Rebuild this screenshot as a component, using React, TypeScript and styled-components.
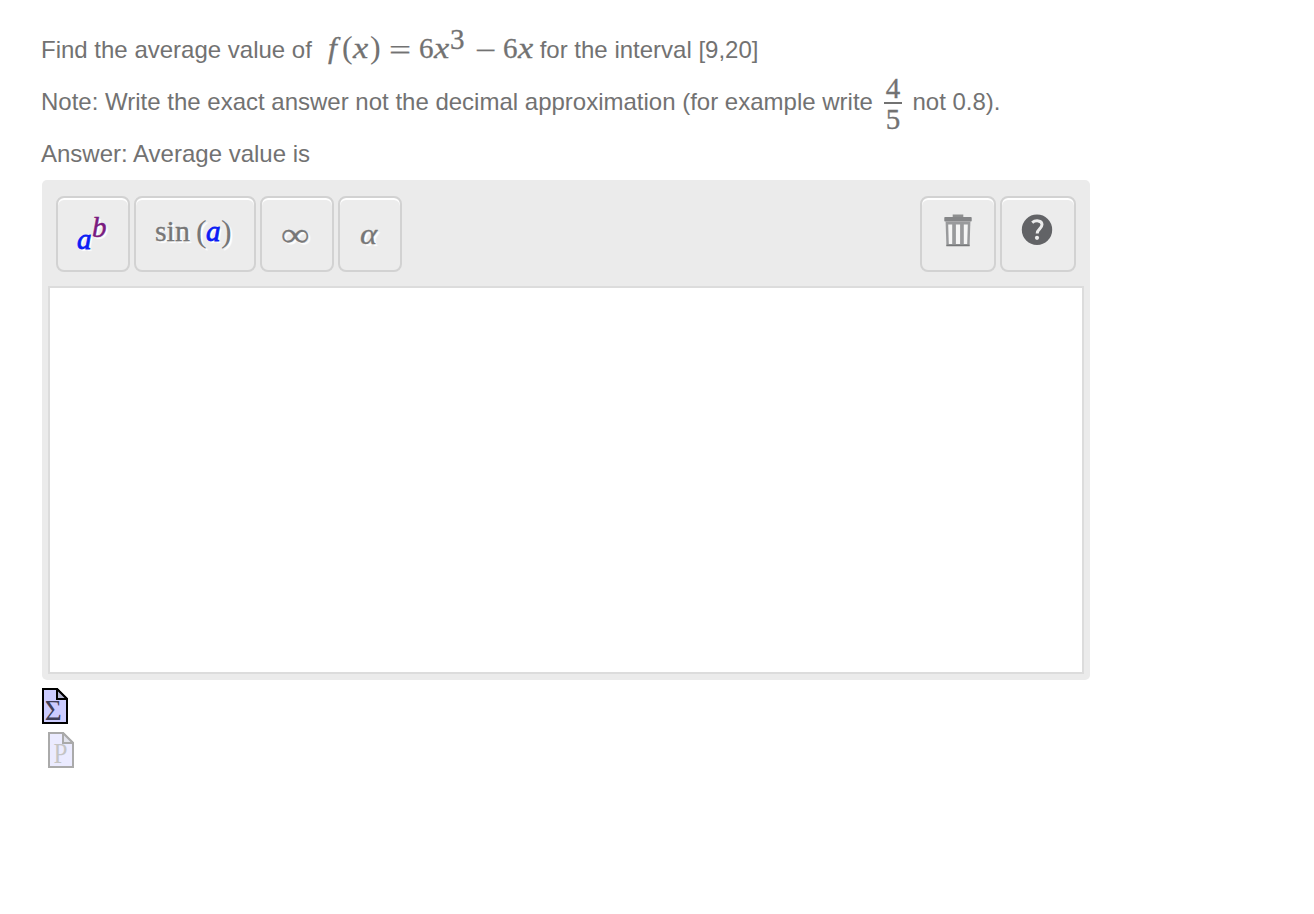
import React from 'react';
import styled, { createGlobalStyle } from 'styled-components';

interface IGlyphProps {
    $w: number;
    $size?: number;
    $raise?: number;
    $italic?: boolean;
    $weight?: number;
    $stretch?: number;
    $gap?: number;
    $color?: string;
}

const GlobalStyle = createGlobalStyle`
    * {
        box-sizing: border-box;
    }

    body {
        margin: 0;
        background: #fff;
        color: #727272;
        font-family: 'Liberation Sans', Arial, sans-serif;
        font-size: 24px;
    }
`;

const Page = styled.main`
    padding: 24px 0 0 41px;
`;

const Line = styled.p`
    height: 52px;
    margin: 0;
    line-height: 52px;
    white-space: nowrap;
`;

const Phrase = styled.span<{ $w: number }>`
    display: inline-block;
    width: ${p => p.$w}px;
`;

const Glyph = styled.span<IGlyphProps>`
    display: inline-block;
    width: ${p => p.$w}px;
    margin-left: ${p => p.$gap || 0}px;
    line-height: 0;
    vertical-align: ${p => p.$raise || 0}px;
    font-family: 'Liberation Serif', 'Times New Roman', serif;
    font-size: ${p => p.$size || 29}px;
    font-style: ${p => (p.$italic ? 'italic' : 'normal')};
    color: ${p => p.$color || 'inherit'};
    -webkit-text-stroke: ${p => p.$weight ?? 0.3}px currentColor;
    transform: scaleX(${p => p.$stretch || 1});
    transform-origin: left;
`;

const Fraction = styled.span`
    display: inline-flex;
    flex-direction: column;
    width: 18px;
    height: 54px;
    margin: 0 10.5px 0 11px;
    vertical-align: top;
    text-align: center;
    font-family: 'Liberation Serif', 'Times New Roman', serif;
    font-size: 29px;
    -webkit-text-stroke: 0.3px currentColor;
`;

const Numerator = styled.span`
    height: 28px;
    border-bottom: 2px solid #727272;
    line-height: 25px;
`;

const Denominator = styled.span`
    height: 26px;
    line-height: 31px;
`;

const Editor = styled.section`
    display: flex;
    flex-direction: column;
    width: 1048px;
    height: 500px;
    margin-left: 1px;
    padding: 16px 6px 6px;
    border-radius: 5px;
    background: #ebebeb;
`;

const Toolbar = styled.div`
    display: flex;
    justify-content: space-between;
    height: 90px;
    padding: 0 8px;
`;

const Group = styled.div`
    display: flex;
    gap: 4px;
`;

const ToolButton = styled.button<{ $w: number; $pad?: number }>`
    display: block;
    width: ${p => p.$w}px;
    height: 76px;
    padding: 0 0 0 ${p => p.$pad || 0}px;
    border: 2px solid #d2d2d2;
    border-radius: 8px;
    background: #ececec;
    box-shadow: inset 0 2px 0 #fff;
    color: #777;
    font-family: 'Liberation Serif', 'Times New Roman', serif;
    font-size: 29px;
    line-height: 72px;
    text-align: left;
    text-shadow: 2px 2px 1px #fff;
    white-space: nowrap;

    svg {
        display: block;
        margin-top: -7px;
    }
`;

const MathField = styled.div`
    flex: 1;
    border: 2px solid #dcdcdc;
    background: #fff;
`;

const Modes = styled.div`
    display: flex;
    flex-direction: column;
    gap: 8px;
    padding: 8px 0 0 1px;
`;

const ModeIcon = styled.svg<{ $indent?: number; $faded?: boolean }>`
    display: block;
    margin-left: ${p => p.$indent || 0}px;
    opacity: ${p => (p.$faded ? 0.38 : 1)};
`;

const TrashIcon = () => (
    <svg width="28" height="34" viewBox="0 0 28 34">
        <path d="M9.5 3V1.2h9V3" fill="#8e8f90" stroke="#8e8f90" strokeWidth="1.6" />
        <rect x="0.3" y="3" width="27.4" height="4.5" rx="0.8" fill="#858688" />
        <path d="M1.6 7.500h24.8l-.8 24.700H2.400z" fill="#999a9c" />
        <path d="M4.2 10.500h4v19.500H4.800zM11.900 10.500h4.200v19.500h-4.200zM19.800 10.500h4l-.600 19.500h-3.400z" fill="#f5f5f5" />
        <path d="M2.400 31.400h23.200" stroke="#77787a" strokeWidth="1.4" />
    </svg>
);

const HelpIcon = () => (
    <svg width="32" height="34" viewBox="0 0 32 34">
        <circle cx="16" cy="15.7" r="15.2" fill="#626366" />
        <path d="M11.2 8.6c3-2.6 9.800-2.600 9.800 2 0 4.200-4.800 4.300-4.800 8.900" fill="none" stroke="#ececec" strokeWidth="3" />
        <circle cx="16" cy="23.8" r="2.100" fill="#ececec" />
    </svg>
);

const PageIcon = ({ letter, indent, faded }: { letter: string; indent?: number; faded?: boolean }) => (
    <ModeIcon width="26" height="36" viewBox="0 0 26 36" $indent={indent} $faded={faded}>
        <path d="M1 1h14l10 10v24H1z" fill="#ccccff" stroke={faded ? '#222' : '#000'} strokeWidth="2" />
        <path d="M15 1v10h10z" fill="#b4b6d2" stroke={faded ? '#222' : '#000'} strokeWidth="2" />
        <text
            x={faded ? 12.5 : 11.2}
            y={faded ? 31 : 31.5}
            textAnchor="middle"
            fontFamily="Liberation Serif, serif"
            fontSize={faded ? 30 : 29}
            textLength={faded ? 14 : 17}
            lengthAdjust="spacingAndGlyphs"
            fill={faded ? '#666' : '#3f3f58'}
        >
            {letter}
        </text>
    </ModeIcon>
);

const App = () => {
    return (
        <Page>
            <GlobalStyle />
            <Line>
                <Phrase $w={287}>Find the average value of</Phrase>
                <Glyph $w={13} $italic $stretch={1.1}>f</Glyph>
                <Glyph $w={11} $size={32} $weight={0} $gap={1}>(</Glyph>
                <Glyph $w={17} $italic $stretch={1.18}>x</Glyph>
                <Glyph $w={11} $size={32} $weight={0}>)</Glyph>
                <Glyph $w={22} $stretch={1.35} $gap={8} $raise={-2} $weight={0.2}>=</Glyph>
                <Glyph $w={15} $gap={8}>6</Glyph>
                <Glyph $w={16} $italic $stretch={1.18}>x</Glyph>
                <Glyph $w={15} $raise={9.5}>3</Glyph>
                <Glyph $w={20} $stretch={1.3} $gap={10} $raise={-2} $weight={0.2}>−</Glyph>
                <Glyph $w={15} $gap={8}>6</Glyph>
                <Glyph $w={15} $italic $stretch={1.18}>x</Glyph>
                <Phrase $w={230}>&nbsp;for the interval [9,20]</Phrase>
            </Line>
            <Line>
                <span>Note: Write the exact answer not the decimal approximation (for example write</span>
                <Fraction>
                    <Numerator>4</Numerator>
                    <Denominator>5</Denominator>
                </Fraction>
                <span>not 0.8).</span>
            </Line>
            <Line>Answer: Average value is</Line>

            <Editor>
                <Toolbar>
                    <Group>
                        <ToolButton $w={74} $pad={19}>
                            <Glyph $w={15} $italic $raise={-5} $weight={0.8} $color="#0a1cf5">a</Glyph>
                            <Glyph $w={14} $italic $raise={7} $weight={0.5} $color="#7a1a80">b</Glyph>
                        </ToolButton>
                        <ToolButton $w={122} $pad={19}>
                            <Glyph $w={41} $raise={3} $stretch={1.03}>sin</Glyph>
                            <Glyph $w={10} $size={32} $raise={2} $weight={0}>(</Glyph>
                            <Glyph $w={15} $italic $raise={3} $weight={0.8} $color="#0a1cf5">a</Glyph>
                            <Glyph $w={10} $size={32} $raise={2} $weight={0}>)</Glyph>
                        </ToolButton>
                        <ToolButton $w={74} $pad={19}>
                            <Glyph $w={28} $size={34} $stretch={1.18} $raise={-2} $weight={0.2}>∞</Glyph>
                        </ToolButton>
                        <ToolButton $w={64} $pad={20}>
                            <Glyph $w={20} $italic $stretch={1.13}>α</Glyph>
                        </ToolButton>
                    </Group>
                    <Group>
                        <ToolButton $w={76} $pad={22} aria-label="Clear"><TrashIcon /></ToolButton>
                        <ToolButton $w={76} $pad={19} aria-label="Help"><HelpIcon /></ToolButton>
                    </Group>
                </Toolbar>
                <MathField />
            </Editor>

            <Modes>
                <PageIcon letter="Σ" />
                <PageIcon letter="P" indent={6} faded />
            </Modes>
        </Page>
    );
};

export default App;
